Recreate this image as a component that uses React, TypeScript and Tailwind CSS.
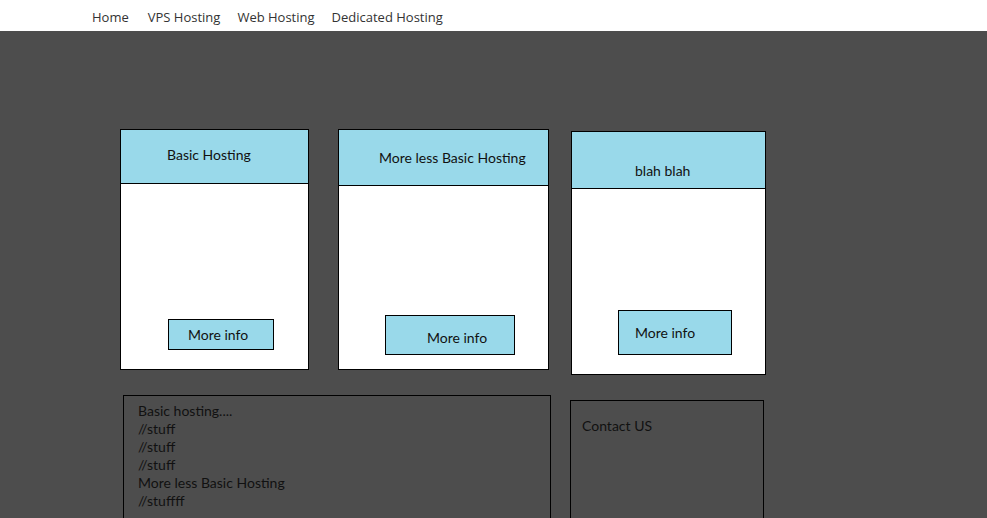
import React from "react";

export default function App() {
  const lato = { fontFamily: "Lato, 'Noto Sans', sans-serif" };
  return (
    <div className="w-[987px] h-[518px] overflow-hidden bg-[#4d4d4d]" style={lato}>
      <nav className="h-[31px] bg-white flex items-center pl-[92px] pt-[5px] text-[13px] text-[#333333]" style={{ fontFamily: "'Open Sans', sans-serif" }}>
        <span>Home</span>
        <span className="ml-[19px]">VPS Hosting</span>
        <span className="ml-[17px]">Web Hosting</span>
        <span className="ml-[17px]">Dedicated Hosting</span>
      </nav>

      <div className="flex items-start mt-[98px] text-[14px] text-[#111111]">
        <div className="ml-[120px] w-[189px] h-[241px] bg-white border border-black flex flex-col">
          <div className="h-[54px] bg-[#99d9ea] border-b border-black pl-[46px] pt-[14px]">Basic Hosting</div>
          <div className="ml-[47px] mt-[135px] w-[106px] h-[31px] bg-[#99d9ea] border border-black pl-[19px] pt-[4px]">More info</div>
        </div>

        <div className="ml-[29px] w-[211px] h-[241px] bg-white border border-black flex flex-col">
          <div className="h-[56px] bg-[#99d9ea] border-b border-black pl-[40px] pt-[17px]">More less Basic Hosting</div>
          <div className="ml-[46px] mt-[129px] w-[130px] h-[40px] bg-[#99d9ea] border border-black pl-[41px] pt-[11px]">More info</div>
        </div>

        <div className="ml-[22px] mt-[2px] w-[195px] h-[244px] bg-white border border-black flex flex-col">
          <div className="h-[57px] bg-[#99d9ea] border-b border-black pl-[63px] pt-[28px]">blah blah</div>
          <div className="ml-[46px] mt-[121px] w-[114px] h-[45px] bg-[#99d9ea] border border-black pl-[16px] pt-[11px]">More info</div>
        </div>
      </div>

      <div className="flex items-start mt-[20px] text-[14px] text-[#111111]">
        <div className="ml-[123px] w-[428px] h-[140px] border border-black pl-[14px] pt-[6px] leading-[18px]">
          <div>Basic hosting....</div>
          <div>//stuff</div>
          <div>//stuff</div>
          <div>//stuff</div>
          <div>More less Basic Hosting</div>
          <div>//stuffff</div>
        </div>
        <div className="ml-[19px] mt-[5px] w-[194px] h-[140px] border border-black pl-[11px] pt-[14px]">Contact US</div>
      </div>
    </div>
  );
}
